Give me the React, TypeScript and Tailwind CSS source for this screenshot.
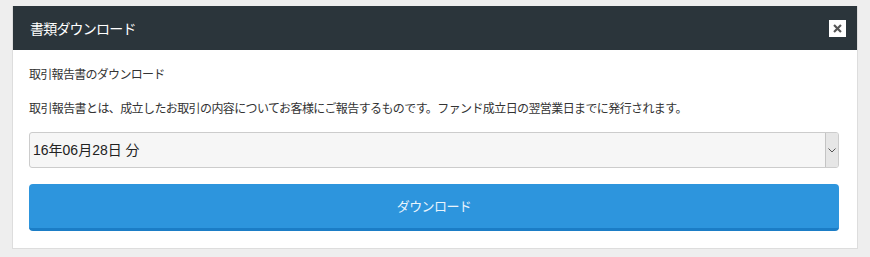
import React from "react";

export default function App() {
  const jp = { fontFamily: '"Noto Sans CJK JP", "Noto Sans", sans-serif' };
  const sel = { fontFamily: '"Liberation Sans", "Noto Sans CJK JP", sans-serif' };
  return (
    <div className="w-[870px] h-[257px] bg-[#eeeeee] pt-[6px] pl-[12px]" style={jp}>
      <div className="w-[846px] h-[243px] bg-white border border-[#dddddd] border-t-0 flex flex-col">
        <div className="h-[44px] bg-[#2b353b] flex items-center justify-between pl-[17px] pr-[11px]">
          <span className="text-white text-[14px] tracking-[-0.8px]">書類ダウンロード</span>
          <div className="w-[17px] h-[17px] bg-white flex items-center justify-center">
            <svg width="9" height="9" viewBox="0 0 10 10">
              <path d="M2 2 L8 8 M8 2 L2 8" stroke="#555" strokeWidth="2.4" strokeLinecap="square" />
            </svg>
          </div>
        </div>
        <div className="flex flex-col px-[16px]">
          <p className="text-[12px] text-[#333] tracking-[-0.7px] mt-[16px] leading-[16px]">取引報告書のダウンロード</p>
          <p className="text-[12px] text-[#333] tracking-[-0.6px] mt-[18px] leading-[16px]">
            取引報告書とは、成立したお取引の内容についてお客様にご報告するものです。ファンド成立日の翌営業日までに発行されます。
          </p>
          <div className="mt-[16px] h-[36px] w-[810px] flex border border-[#cccccc] rounded-[3px] bg-[#f6f6f6] overflow-hidden">
            <div className="flex-1 flex items-center pl-[3px] text-[14px] text-[#222]" style={sel}>16年06月28日 分</div>
            <div className="w-[13px] bg-[#e6e6e6] border-l border-[#c4c4c4] flex items-center justify-center">
              <svg width="8" height="5" viewBox="0 0 8 5">
                <path d="M0.5 0.5 L4 4 L7.5 0.5" stroke="#555" strokeWidth="1" fill="none" />
              </svg>
            </div>
          </div>
          <div className="mt-[16px] h-[47px] w-[810px] rounded-[4px] bg-[#2d95dd] border-b-[3px] border-[#1b7dc6] flex items-center justify-center">
            <span className="text-[13px] text-[#eaf4fc] tracking-[-0.6px]">ダウンロード</span>
          </div>
        </div>
      </div>
    </div>
  );
}
